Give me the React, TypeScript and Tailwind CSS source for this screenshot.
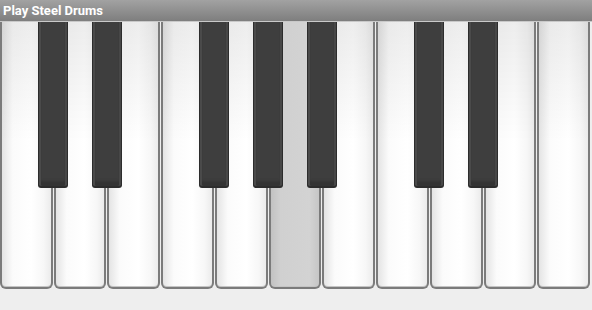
const whiteKeys = Array.from({ length: 11 }, (_, i) => i)
const pressed = 5
// left edge of each black key, in px
const blackKeys = [38, 92, 199, 253, 307, 414, 468]

const WhiteKey = ({ down }: { down: boolean }) => (
  <div
    className={`${down ? "bg-[linear-gradient(to_right,#c2c2c2,#d0d0d0_20%,#d3d3d3_80%,#c6c6c6)]" : "bg-[linear-gradient(to_bottom,rgba(0,0,0,0.07),rgba(0,0,0,0)_45%),linear-gradient(to_right,#e4e4e4,#fbfbfb_22%,#ffffff_60%,#f7f7f7_85%,#ebebeb)]"} h-full flex-1 rounded-b-[6px] border-2 border-t-0 border-[#7b7b7b] shadow-[inset_0_-1px_0_#c4c4c4]`}
  />
)

const BlackKey = ({ left }: { left: number }) => (
  <div
    className="absolute top-0 h-[166px] w-[30px] rounded-b-[3px] bg-[#3e3e3e] border-x border-b-2 border-[#2c2c2c] shadow-[inset_2px_0_0_#4a4a4a,inset_-2px_0_0_#474747,inset_0_-5px_3px_#333]"
    style={{ left }}
  />
)

export default function App() {
  return (
    <div className="w-[592px] h-[310px] bg-[#eeeeee] flex flex-col font-['Roboto',sans-serif] overflow-hidden">
      <div className="h-[22px] bg-[linear-gradient(to_bottom,#a2a2a2,#7e7e7e)] border-b border-[#c9c9c9] flex items-center px-[3px]">
        <span className="text-white text-[13px] font-bold leading-none">Play Steel Drums</span>
      </div>
      <div className="relative h-[267px] flex gap-[1px] pr-[2px] bg-[#eeeeee]">
        {whiteKeys.map((k) => (
          <WhiteKey key={k} down={k === pressed} />
        ))}
        {blackKeys.map((x) => (
          <BlackKey key={x} left={x} />
        ))}
      </div>
    </div>
  )
}
